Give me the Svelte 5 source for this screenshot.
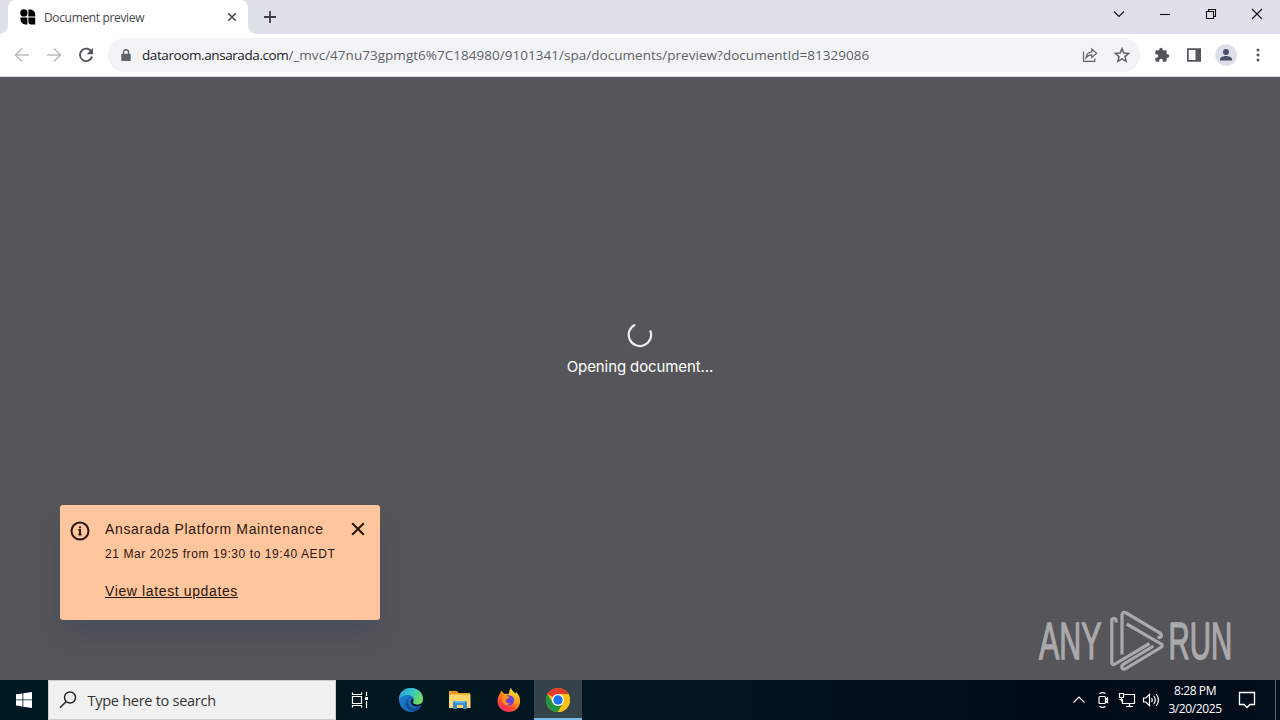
<script>
  let notice = {
    title: 'Ansarada Platform Maintenance',
    time: '21 Mar 2025 from 19:30 to 19:40 AEDT',
    link: 'View latest updates'
  };

  let showNotice = true;
</script>

<div class="screen">
  <div class="tabstrip">
    <div class="tab">
      <svg class="favicon" width="16" height="16" viewBox="0 0 16 16">
        <circle cx="3.9" cy="3.9" r="3.6" />
        <path d="M8.4 .5h1.8a5 5 0 0 1 5 5v1.9H8.4zM.5 8.5h6.9v6.9H5.3A4.8 4.8 0 0 1 .5 10.6zM8.4 8.5h6.8v6.9h-4.4a2.4 2.4 0 0 1-2.4-2.4z" />
      </svg>
      <span class="tab-title">Document preview</span>
      <svg class="tab-close" width="10" height="10" viewBox="0 0 10 10">
        <path d="M1.3 1.3l7.4 7.4M8.7 1.3L1.3 8.7" />
      </svg>
    </div>
    <svg class="new-tab" width="14" height="14" viewBox="0 0 14 14">
      <path d="M7 1v12M1 7h12" />
    </svg>
    <div class="window-controls">
      <svg width="46" height="34" viewBox="0 0 46 34"><path d="M18 11.5l5 5 5-5" /></svg>
      <svg width="46" height="34" viewBox="0 0 46 34"><path d="M18 14.5h10" /></svg>
      <svg width="46" height="34" viewBox="0 0 46 34">
        <path d="M18.5 11.5h7v7h-7zM20.5 11V9.5h7v7H26" />
      </svg>
      <svg width="46" height="34" viewBox="0 0 46 34"><path d="M18 9l10 10M28 9L18 19" /></svg>
    </div>
  </div>

  <div class="toolbar">
    <div class="nav">
      <svg class="disabled" width="16" height="16" viewBox="0 0 16 16">
        <path d="M15 8H2M8 1.5L1.5 8 8 14.5" />
      </svg>
      <svg class="disabled" width="16" height="16" viewBox="0 0 16 16">
        <path d="M1 8h13M8 1.5L14.5 8 8 14.5" />
      </svg>
      <svg width="16" height="16" viewBox="0 0 16 16">
        <path d="M13.8 5.3A6.2 6.2 0 1 0 14.1 9.6" />
        <path class="solid" d="M15 1v6.3H8.7z" />
      </svg>
    </div>
    <div class="address">
      <svg class="lock" width="10" height="13" viewBox="0 0 10 13">
        <path d="M1.2 4.8h7.6q.9 0 .9.9v5.4q0 .9-.9.9H1.2q-.9 0-.9-.9V5.7q0-.9.9-.9z" />
        <path class="shackle" d="M2.5 5V3.2a2.5 2.5 0 0 1 5 0V5" />
      </svg>
      <span class="url"
        ><span class="host">dataroom.ansarada.com</span><span class="path"
          >/_mvc/47nu73gpmgt6%7C184980/9101341/spa/documents/preview?documentId=81329086</span
        ></span
      >
      <svg class="share" width="16" height="16" viewBox="0 0 16 16">
        <path d="M1.5 4.5v9.8h11.3v-2.8" />
        <path d="M4 10.8C4.3 7 6.6 5.2 9.8 5V2.1l4.8 4.2-4.8 4.2V7.8C7 7.8 5.2 9 4 10.8z" />
      </svg>
      <svg class="star" width="16" height="16" viewBox="0 0 16 16">
        <path d="M8 1.7l1.8 4.4 4.8.4-3.6 3.1 1.1 4.7L8 11.8l-4.1 2.5L5 9.6 1.4 6.5l4.8-.4z" />
      </svg>
    </div>
    <div class="actions">
      <svg width="16" height="16" viewBox="0 0 24 24">
        <path
          d="M20.5 11H19V7a2 2 0 0 0-2-2h-4V3.5a2.5 2.5 0 0 0-5 0V5H4a2 2 0 0 0-2 2v3.8h1.5a2.7 2.7 0 0 1 0 5.4H2V20c0 1.1.9 2 2 2h3.8v-1.5a2.7 2.7 0 0 1 5.4 0V22H17a2 2 0 0 0 2-2v-4h1.5a2.5 2.5 0 0 0 0-5z"
        />
      </svg>
      <svg width="16" height="16" viewBox="0 0 16 16">
        <path fill-rule="evenodd" d="M1 1.2h14v13.6H1zM2.7 3v10h6.8V3z" />
      </svg>
      <svg class="profile" width="22" height="22" viewBox="0 0 22 22">
        <circle class="profile-bg" cx="11" cy="11" r="10.8" />
        <circle cx="11" cy="8" r="3" />
        <path d="M5 16.6v-1.4c0-2.2 3.6-3.2 6-3.2s6 1 6 3.2v1.4z" />
      </svg>
      <svg width="16" height="16" viewBox="0 0 16 16">
        <circle cx="8" cy="3" r="1.5" />
        <circle cx="8" cy="8" r="1.5" />
        <circle cx="8" cy="13" r="1.5" />
      </svg>
    </div>
  </div>

  <main class="page">
    <div class="loader">
      <svg width="26" height="26" viewBox="0 0 26 26">
        <path d="M8.1 2.7A11.2 11.2 0 1 0 23.2 8.4" />
      </svg>
      <span class="loader-text">Opening document...</span>
    </div>

    {#if showNotice}
      <div class="notice">
        <svg class="info" width="20" height="20" viewBox="0 0 20 20">
          <circle cx="10" cy="10" r="8.5" />
          <path d="M8.5 8.9H10v4.3M8.5 13.5h3M9.1 6.2h1.8" />
        </svg>
        <div class="notice-body">
          <div class="notice-title">{notice.title}</div>
          <div class="notice-time">{notice.time}</div>
          <span class="notice-link">{notice.link}</span>
        </div>
        <button class="dismiss" aria-label="Close" onclick={() => (showNotice = false)}>
          <svg width="14" height="14" viewBox="0 0 14 14">
            <path d="M1.2 1.2l11.6 11.6M12.8 1.2L1.2 12.8" />
          </svg>
        </button>
      </div>
    {/if}

    <svg class="watermark" width="230" height="74" viewBox="0 0 230 74">
      <text transform="translate(4 53) scale(.585 1)">ANY</text>
      <g class="mark">
        <path d="M81 16.5V13.5Q79 11 76.8 13.5V57Q77.5 59.5 80 58L114.5 37.5" />
        <path d="M87 48.5V9Q87.5 5.5 90.5 6.5L125 27Q128.5 30.5 124.5 31.5L122.5 31" />
        <path d="M91.7 18L126.500 38.2Q128 39.5 126.5 41L90 63Q86.5 63.5 86.8 60L88 58.5L118.5 40" />
      </g>
      <text transform="translate(133.500 53) scale(.565 1)">RUN</text>
    </svg>
  </main>

  <div class="taskbar">
    <div class="start">
      <svg width="16" height="16" viewBox="0 0 16 16">
        <path d="M0 2.3L6.5 1.4v6.1H0zM7.3 1.3L16 0v7.5H7.3zM0 8.3h6.5v6.2L0 13.6zM7.3 8.3H16V16l-8.7-1.3z" />
      </svg>
    </div>
    <div class="search">
      <svg width="18" height="18" viewBox="0 0 18 18">
        <circle cx="11" cy="6.5" r="5.5" />
        <path d="M7.2 10.5L1 16.8" />
      </svg>
      <span>Type here to search</span>
    </div>
    <div class="app">
      <svg width="18" height="18" viewBox="0 0 18 18" fill="none" stroke="#fff" stroke-width="1.2">
        <path d="M1.5 1.5v2h9v-2M1.5 16.5v-2h9v2M1.5 5.5h9v7h-9zM15.5 1v4M15.5 10v7" />
        <path d="M14 6h3v3h-3z" fill="#fff" stroke="none" />
      </svg>
    </div>
    <div class="app edge">
      <svg width="26" height="26" viewBox="0 0 26 26">
        <defs>
          <linearGradient id="edge-top" x1="0" x2="1" y1="0" y2=".4">
            <stop offset="0" stop-color="#229bdc" />
            <stop offset=".55" stop-color="#35c5c5" />
            <stop offset="1" stop-color="#70db5c" />
          </linearGradient>
          <linearGradient id="edge-low" x1="0" x2="1" y1="0" y2="1">
            <stop offset="0" stop-color="#2189df" />
            <stop offset="1" stop-color="#1054a0" />
          </linearGradient>
        </defs>
        <path d="M1 12C1 5 6.5 1 13 1c7 0 12 5 12 11 0 4.5-3.5 6.5-7 6.5 2 .8 4 .3 5.8-.8C22 22 18 25 13 25 6 25 1 19.5 1 12z" fill="url(#edge-low)" />
        <path d="M1 13C1 5 6.5 1 13 1c7 0 12.3 5 12 11.5-.2 4-4 6-8 5-3-.7-1-2.500-1-4.500 0-3-3-5-6.500-5C5.500 8 2 10 1 13z" fill="url(#edge-top)" />
        <path d="M13 10.3c-4 1.5-4.500 6.500-1 9.700 3 2.700 7.500 2.300 11-1C20 25 12 25.500 9 20.500c-2.500-4-.8-9 4-10.200z" fill="#134b8d" />
        <path d="M14.5 11.5c2 1-.8 3.500 1 5 1.800 1.400 5.500 1.600 8 0-1.500 2.700-5 3.500-7.500 2.500-3.500-1.400-4.300-5.800-1.500-7.500z" fill="#061722" />
      </svg>
    </div>
    <div class="app">
      <svg width="22" height="20" viewBox="0 0 22 20">
        <path d="M0 1h8l1.5 2H21v4H0z" fill="#e8a31f" />
        <path d="M2 2h6v1H2z" fill="#f47d20" />
        <path d="M0 4.500h21.500V18H0z" fill="#ffd66b" />
        <path d="M4 19v-6.500q0-1.500 1.500-1.500h11q1.500 0 1.500 1.500V19h-4v-4H8v4z" fill="#3a8bc8" />
        <path d="M6 11h10v2H6z" fill="#65b5e6" />
      </svg>
    </div>
    <div class="app">
      <svg width="24" height="24" viewBox="0 0 24 24">
        <defs>
          <linearGradient id="fox" x1=".8" x2=".2" y1="0" y2="1">
            <stop offset="0" stop-color="#fff14a" />
            <stop offset=".4" stop-color="#ff980e" />
            <stop offset=".7" stop-color="#ff4b38" />
            <stop offset="1" stop-color="#eb2470" />
          </linearGradient>
        </defs>
        <path d="M14 0c1 3 3 4 4.500 5.500l.5-1.500c3 3 4.500 6 4 10.500-.6 5.500-5 9.500-11 9.500S.5 19.500.5 13.500C.5 9.500 2 7 3.500 5L4 2.500 7.500 6c2-.5 3.500-.2 4.500.3C12 4 12.500 1.500 14 0z" fill="url(#fox)" />
        <circle cx="12" cy="12.300" r="5.300" fill="#7140d0" />
        <path d="M6 8c3-1 5 0 6.500 1.500L9 11.500c-1 2 1 4.500 4 3.500-2 3.500-7 2-7.500-2-.2-2 .5-3 .5-5z" fill="#ff951f" />
        <path d="M13 7.500c5 .5 6 5 3.500 9 3-2 4-8-.5-11-2-1.200-4-.5-5 .5z" fill="#ffc42d" />
      </svg>
    </div>
    <div class="app active">
      <svg width="24" height="24" viewBox="0 0 24 24">
        <circle cx="12" cy="12" r="12" fill="#fbc116" />
        <path d="M12 12L1.6 6A12 12 0 0 1 22.4 6H12z" fill="#e33b2e" />
        <path d="M1.6 6A12 12 0 0 0 12 24l5.2-9L12 12 6.8 15z" fill="#229342" />
        <path d="M12 6h10.400A12 12 0 0 1 12 24l5.200-9z" fill="#fbc116" />
        <circle cx="12" cy="12" r="6" fill="#fff" />
        <circle cx="12" cy="12" r="4.700" fill="#1a73e8" />
      </svg>
    </div>

    <div class="tray">
      <svg width="12" height="20" viewBox="0 0 12 20"><path d="M.5 12.5L6 7l5.5 5.5" /></svg>
      <svg width="12" height="20" viewBox="0 0 12 20">
        <path d="M3 6.5h4.500q1 0 1 1v5q0 1-1 1H3q-1 0-1-1v-5q0-1 1-1zM8.500 9.500l2-1.500v4.500l-2-1.500M2.500 3.500Q5.500 1.700 8.500 3.500M2.500 16.500q3 1.800 6 0" />
      </svg>
      <svg width="18" height="20" viewBox="0 0 18 20">
        <path d="M6.5 4.5h10v9H4.500V9M8 16.500h7M11.500 13.500v3M1.500 3.500h4v4h-4zM3.500 7.500v4M1.500 9.500h3" />
      </svg>
      <svg width="18" height="20" viewBox="0 0 18 20">
        <path d="M1.5 8v4h2.300L7.500 15.500v-11L3.800 8zM9.500 8q1.500 2 0 4M11.800 6q3 4 0 8M14.200 4q4.500 6 0 12" />
      </svg>
    </div>
    <div class="clock">
      <span>8:28 PM</span>
      <span>3/20/2025</span>
    </div>
    <svg class="action-center" width="18" height="18" viewBox="0 0 18 18">
      <path d="M1.5 1.5h15v12H12l-3 3-3-3H1.500z" />
    </svg>
    <div class="peek"></div>
  </div>
</div>

<style>
  :global(body) {
    margin: 0;
    overflow: hidden;
  }

  .screen {
    width: 1280px;
    height: 720px;
    display: flex;
    flex-direction: column;
    font-family: 'Open Sans', 'Noto Sans', sans-serif;
    white-space: nowrap;
  }

  svg {
    display: block;
    flex: none;
  }

  .tabstrip {
    height: 34px;
    flex: none;
    display: flex;
    background: #dee1e9;
  }

  .tab {
    width: 240px;
    box-sizing: border-box;
    margin-left: 8px;
    padding: 0 11px 0 12px;
    display: flex;
    align-items: center;
    background: white;
    border-radius: 8px 8px 0 0;
    position: relative;
  }

  .tab::before,
  .tab::after {
    content: '';
    position: absolute;
    bottom: 0;
    width: 8px;
    height: 8px;
  }

  .tab::before {
    left: -8px;
    background: radial-gradient(circle at 0 0, transparent 7.5px, white 8px);
  }

  .tab::after {
    right: -8px;
    background: radial-gradient(circle at 100% 0, transparent 7.5px, white 8px);
  }

  .tab-title {
    margin-left: 8px;
    flex: 1;
    font-size: 12px;
    letter-spacing: -0.35px;
    color: #45474a;
  }

  .tab-close {
    stroke: #45494d;
    stroke-width: 1.6;
  }

  .new-tab {
    margin: 10px 0 0 15px;
    stroke: #3c4043;
    stroke-width: 1.8;
  }

  .window-controls {
    margin-left: auto;
    display: flex;
    fill: none;
    stroke: #111;
    stroke-width: 1.1;
  }

  .toolbar {
    height: 43px;
    box-sizing: border-box;
    flex: none;
    display: flex;
    align-items: center;
    background: white;
    border-bottom: 1px solid #d5d6d8;
  }

  .nav {
    width: 94px;
    padding-left: 14px;
    display: flex;
    gap: 16px;
    fill: none;
    stroke: #505357;
    stroke-width: 1.9;
  }

  .nav .disabled {
    stroke: #babcbe;
    stroke-width: 1.6;
  }

  .nav .solid {
    fill: #505357;
    stroke: none;
  }

  .address {
    width: 1032px;
    height: 34px;
    box-sizing: border-box;
    padding: 0 10px 0 13px;
    display: flex;
    align-items: center;
    border-radius: 17px;
    background: #f1f3f4;
  }

  .lock {
    fill: #5f6368;
  }

  .lock .shackle {
    fill: none;
    stroke: #5f6368;
    stroke-width: 1.4;
  }

  .url {
    flex: 1;
    margin-left: 11px;
    font-size: 13.5px;
    color: #5f6368;
  }

  .host {
    color: #202124;
    letter-spacing: -0.41px;
  }

  .path {
    letter-spacing: 0.03px;
  }

  .share,
  .star {
    fill: none;
    stroke: #5f6368;
    stroke-width: 1.2;
  }

  .star {
    margin-left: 16px;
    stroke-width: 1.5;
  }

  .actions {
    margin-left: 14px;
    display: flex;
    align-items: center;
    gap: 16px;
    fill: #53575b;
  }

  .profile {
    margin: 0 -3px;
    fill: #4a5068;
  }

  .profile-bg {
    fill: #dde0ea;
  }

  .page {
    flex: 1;
    position: relative;
    background: #565559;
    overflow: hidden;
  }

  .loader {
    padding-top: 245px;
    display: flex;
    flex-direction: column;
    align-items: center;
    color: white;
  }

  .loader svg {
    fill: none;
    stroke: #eee;
    stroke-width: 2.2;
  }

  .loader-text {
    margin-top: 9px;
    font-family: Inter, 'Liberation Sans', sans-serif;
    font-size: 15px;
    line-height: 20px;
    letter-spacing: -0.1px;
  }

  .notice {
    position: absolute;
    left: 60px;
    bottom: 60px;
    width: 320px;
    height: 115px;
    box-sizing: border-box;
    padding: 16px 15px 0 10px;
    display: flex;
    align-items: flex-start;
    color: #28150d;
    background: #ffc59d;
    border-radius: 3px;
    box-shadow: 0 16px 24px -4px rgba(62, 74, 92, 0.65);
    font-family: 'Liberation Sans', Arial, sans-serif;
  }

  .info {
    fill: none;
    stroke: #28150d;
    stroke-width: 2;
  }

  .notice-body {
    flex: 1;
    margin-left: 15px;
  }

  .notice-title {
    font-size: 14px;
    line-height: 16px;
    letter-spacing: 0.64px;
  }

  .notice-time {
    margin-top: 9px;
    font-size: 12px;
    line-height: 16px;
    letter-spacing: 0.58px;
  }

  .notice-link {
    display: inline-block;
    margin-top: 20px;
    font-size: 14px;
    line-height: 18px;
    letter-spacing: 0.62px;
    text-decoration: underline;
  }

  .dismiss {
    padding: 1px 0 0;
    border: none;
    background: none;
    stroke: #28150d;
    stroke-width: 2;
    cursor: pointer;
  }

  .watermark {
    position: absolute;
    left: 1035px;
    bottom: 0;
    fill: #aaaaac;
    font-family: 'Liberation Sans', sans-serif;
    font-size: 52px;
  }

  .watermark text {
    stroke: #aaaaac;
    stroke-width: 1.4;
  }

  .mark {
    fill: none;
    stroke: #aaaaac;
    stroke-width: 3.2;
  }

  .taskbar {
    height: 40px;
    flex: none;
    display: flex;
    align-items: center;
    color: white;
    background: linear-gradient(90deg, #001820, #031720 50%, #020c18 80%, #030d1b);
  }

  .start {
    width: 48px;
    display: flex;
    justify-content: center;
    fill: white;
  }

  .search {
    width: 288px;
    height: 40px;
    box-sizing: border-box;
    padding-left: 10px;
    display: flex;
    align-items: center;
    gap: 10.5px;
    border: 1px solid #cfcfcf;
    background: #f1f1f1;
    color: #333;
    font-size: 14.5px;
    letter-spacing: -0.27px;
  }

  .search svg {
    fill: none;
    stroke: #202020;
    stroke-width: 1.4;
  }

  .app {
    width: 48px;
    height: 40px;
    margin-right: 1px;
    display: flex;
    align-items: center;
    justify-content: center;
  }

  .app.edge {
    margin-left: 2px;
  }

  .app.active {
    margin: 0;
    box-sizing: border-box;
    border-bottom: 2px solid #76b9ed;
    padding-top: 2px;
    background: #36434b;
  }

  .tray {
    margin-left: auto;
    display: flex;
    gap: 12px;
    fill: none;
    stroke: white;
    stroke-width: 1.2;
  }

  .tray svg:nth-child(3) {
    margin-left: -3px;
  }

  .tray svg:nth-child(4) {
    margin-left: -6px;
  }

  .clock {
    width: 54px;
    margin-left: 8px;
    display: flex;
    flex-direction: column;
    align-items: center;
    font-size: 12px;
    line-height: 18px;
    letter-spacing: -0.4px;
  }

  .action-center {
    margin-left: 16px;
    fill: none;
    stroke: white;
    stroke-width: 1.3;
  }

  .peek {
    width: 5px;
    height: 40px;
    box-sizing: border-box;
    margin-left: 19px;
    border-left: 1px solid #596572;
  }
</style>
